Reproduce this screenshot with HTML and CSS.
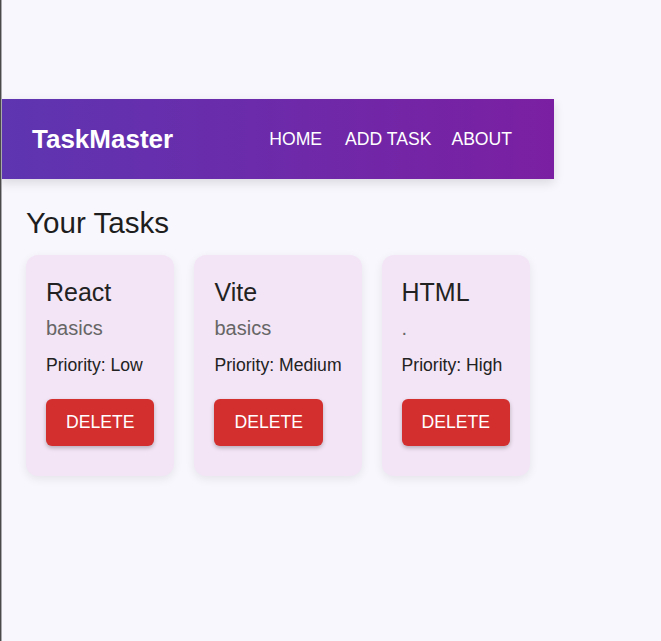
FILE: index.html
```html
<!DOCTYPE html>
<html lang="en">
<head>
<meta charset="utf-8">
<title>TaskMaster</title>
<link rel="stylesheet" href="styles.css">
</head>
<body>
<div class="frame-line"></div>
<nav class="navbar">
  <div class="brand">TaskMaster</div>
  <div class="nav-links">
    <a class="nav-link" href="#">HOME</a>
    <a class="nav-link" href="#">ADD TASK</a>
    <a class="nav-link" href="#">ABOUT</a>
  </div>
</nav>
<main class="content">
  <h2 class="page-title">Your Tasks</h2>
  <div class="task-list">
    <div class="task-card">
      <h3 class="task-title">React</h3>
      <p class="task-desc">basics</p>
      <p class="task-priority">Priority: Low</p>
      <button class="delete-btn">DELETE</button>
    </div>
    <div class="task-card">
      <h3 class="task-title">Vite</h3>
      <p class="task-desc">basics</p>
      <p class="task-priority">Priority: Medium</p>
      <button class="delete-btn">DELETE</button>
    </div>
    <div class="task-card">
      <h3 class="task-title">HTML</h3>
      <p class="task-desc">.</p>
      <p class="task-priority">Priority: High</p>
      <button class="delete-btn">DELETE</button>
    </div>
  </div>
</main>
</body>
</html>
```
FILE: styles.css
```css
html, body {
  margin: 0;
  padding: 0;
}
body {
  background: #f8f7fe;
  font-family: "Liberation Sans", Arial, sans-serif;
  color: #222;
  min-height: 641px;
}
.frame-line {
  position: fixed;
  left: 0;
  top: 0;
  bottom: 0;
  width: 1px;
  background: #4a4a4a;
  box-shadow: 1px 0 0 #a9a9ad;
  z-index: 10;
}
.navbar {
  margin-top: 99px;
  width: 554px;
  height: 80px;
  box-sizing: border-box;
  padding: 0 42px 0 32px;
  display: flex;
  align-items: center;
  justify-content: space-between;
  background: linear-gradient(90deg, #5e35b1 0%, #7b1fa2 100%);
  box-shadow: 0 4px 10px rgba(0, 0, 0, 0.12);
  color: #fff;
}
.brand {
  font-size: 26px;
  font-weight: bold;
}
.nav-links {
  display: flex;
  gap: 20px;
}
.nav-link {
  color: #fff;
  text-decoration: none;
  font-size: 17.6px;
}
.nav-link:first-child {
  margin-right: 3px;
}
.content {
  padding: 0 26px;
}
.page-title {
  margin: 26.5px 0 15.3px;
  font-size: 29.6px;
  font-weight: normal;
  color: #1e1e1e;
}
.task-list {
  display: flex;
  gap: 20px;
  align-items: flex-start;
}
.task-card {
  background: #f3e5f5;
  border-radius: 12px;
  padding: 23px 20px 20px;
  box-shadow: 0 3px 10px rgba(0, 0, 0, 0.08);
}
.task-title {
  margin: 0;
  font-size: 25px;
  font-weight: normal;
  color: #222;
}
.task-desc {
  margin: 10px 0 0;
  font-size: 20px;
  color: #666;
}
.task-priority {
  margin: 15.5px 0 0;
  font-size: 17.6px;
  color: #222;
}
.delete-btn {
  display: block;
  margin: 22.5px 0 10px;
  padding: 13px 20px;
  border: none;
  border-radius: 6px;
  background: #d32f2f;
  color: #fff;
  font-family: "Liberation Sans", Arial, sans-serif;
  font-size: 17.6px;
  line-height: normal;
  box-shadow: 0 2px 4px rgba(0, 0, 0, 0.25);
}
```
